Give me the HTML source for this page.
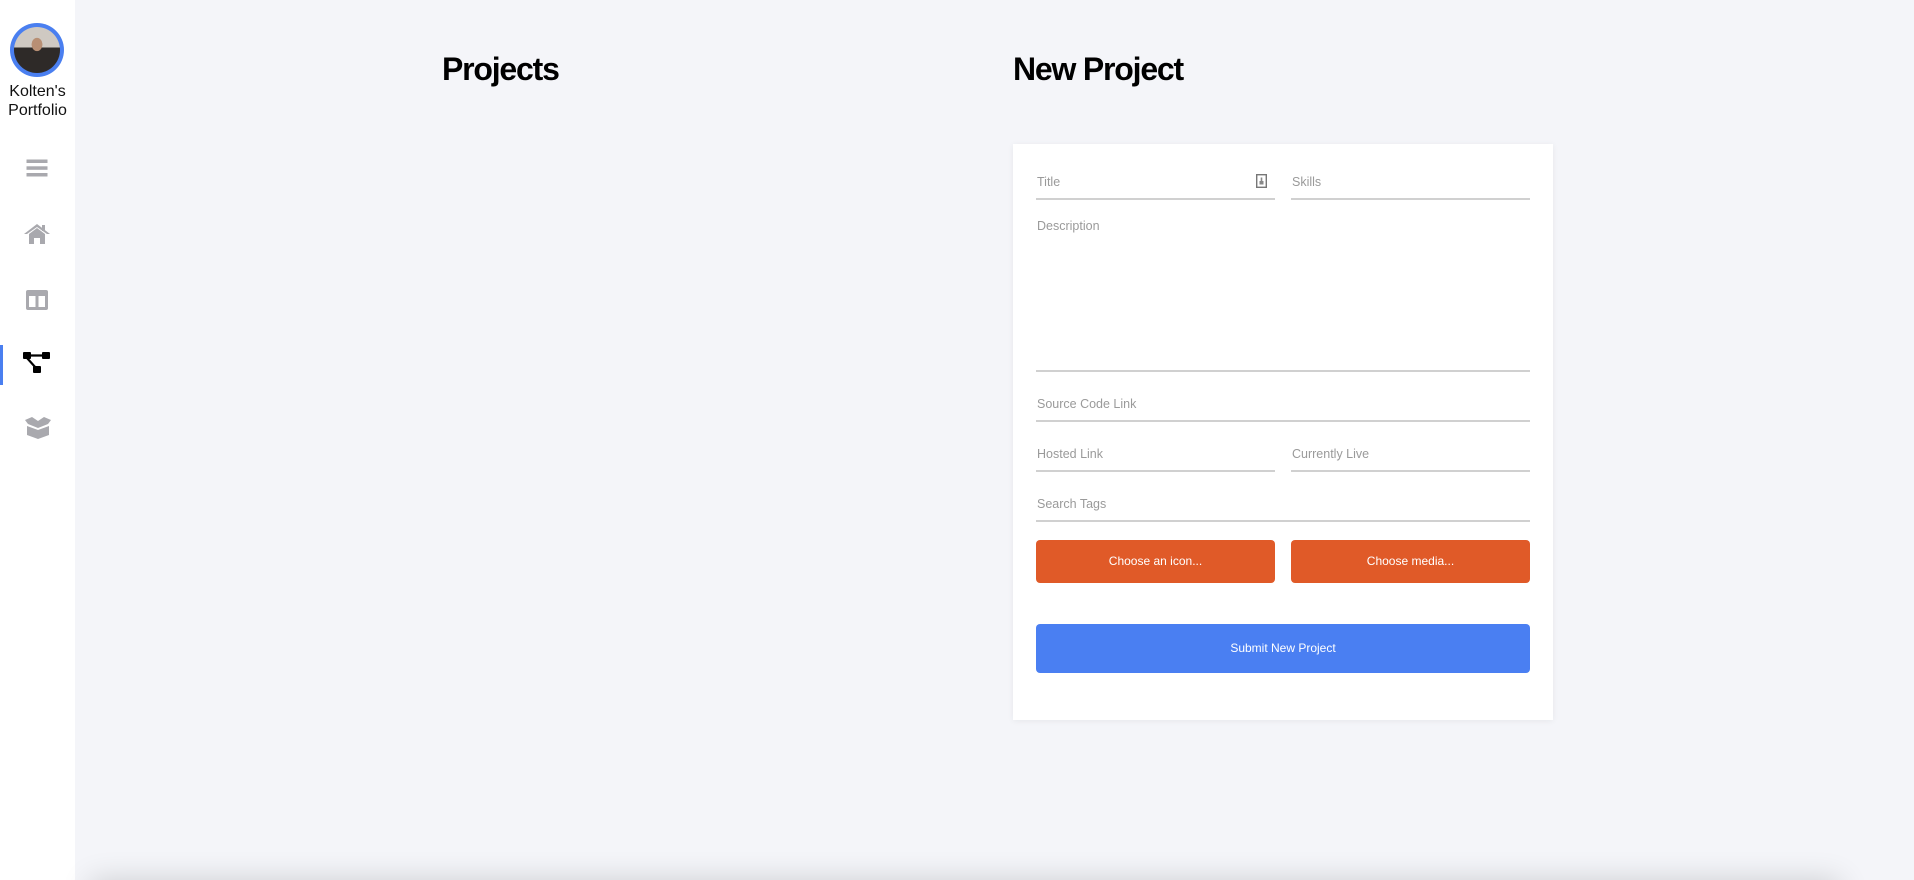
<!DOCTYPE html>
<html style="overflow:hidden;width:1914px;height:880px"><head><meta charset="utf-8"><style>
*{margin:0;padding:0;box-sizing:border-box}
html,body{width:1914px;height:880px;overflow:hidden}
body{background:#f4f5f9;font-family:"Liberation Sans",sans-serif;position:relative}
.side{position:absolute;left:0;top:0;width:75px;height:880px;background:#fff}
.av{position:absolute;left:10px;top:23px;width:54px;height:54px;border-radius:50%;background:#4a7ff0;padding:4px}
.av div{width:100%;height:100%;border-radius:50%;background:radial-gradient(ellipse at 50% 38%,#b88f74 0 16%,transparent 17%),linear-gradient(#cfc9c2 0 45%,#2e2a28 45%);}
.name{position:absolute;left:0;width:75px;top:82px;text-align:center;font-size:16px;line-height:19px;color:#111}
.ic{position:absolute;left:23px}
.bar{position:absolute;left:0;top:345px;width:3px;height:40px;background:#4a7ff0}
h1{position:absolute;top:51px;font-size:32px;font-weight:bold;color:#000;letter-spacing:-1.2px}
.card{position:absolute;left:1013px;top:144px;width:540px;height:576px;background:#fff;box-shadow:0 1px 6px rgba(0,0,0,.06)}
.l{position:absolute;font-size:12.5px;color:#9a9a9a}
.u{position:absolute;height:2px;background:#d0d0d0}
.btn{position:absolute;border-radius:4px;color:#fff;font-size:12px;text-align:center}
.bottom{position:absolute;left:90px;top:880px;width:1750px;height:40px;box-shadow:0 0 30px rgba(0,0,0,.16)}
</style></head><body>
<div class="side">
<div class="av"><div></div></div>
<div class="name">Kolten's<br>Portfolio</div>
<svg class="ic" style="top:158px" width="28" height="20" viewBox="0 0 28 20"><rect x="3.5" y="1.5" width="21" height="3.5" fill="#a9a9ae"/><rect x="3.5" y="8.3" width="21" height="3.5" fill="#a9a9ae"/><rect x="3.5" y="15" width="21" height="3.5" fill="#a9a9ae"/></svg>
<svg class="ic" style="top:222px" width="28" height="24" viewBox="0 0 28 24"><path d="M1 12 L14 2 L27 12 L24 12 L14 5 L4 12Z" fill="#a9a9ae"/><path d="M6 12 L14 6 L22 12 L22 22 L17 22 L17 16 L11 16 L11 22 L6 22Z" fill="#a9a9ae"/><rect x="19" y="3" width="3" height="6" fill="#a9a9ae"/></svg>
<svg class="ic" style="top:289px" width="28" height="22" viewBox="0 0 28 22"><rect x="3" y="1" width="22" height="20" rx="2" fill="#a9a9ae"/><rect x="6" y="7" width="6.5" height="11" fill="#fff"/><rect x="15.5" y="7" width="6.5" height="11" fill="#fff"/></svg>
<div class="bar"></div>
<svg class="ic" style="top:351px" width="30" height="26" viewBox="0 0 30 26"><rect x="0" y="1" width="8" height="7" rx="1" fill="#000"/><rect x="19" y="1" width="8" height="7" rx="1" fill="#000"/><rect x="10" y="15" width="8" height="7" rx="1" fill="#000"/><path d="M7 4.5 H20 M4 7 L13 17" stroke="#000" stroke-width="2.2"/></svg>
<svg class="ic" style="top:416px" width="30" height="24" viewBox="0 0 30 24"><path d="M2 4 L9 1 L15 5 L21 1 L28 4 L25 8 L15 12 L5 8Z" fill="#a9a9ae"/><path d="M4 10 L15 14 L26 10 L26 19 L15 23 L4 19Z" fill="#a9a9ae"/></svg>
</div>
<h1 style="left:442px">Projects</h1>
<h1 style="left:1013px">New Project</h1>
<div class="card"></div>

<div class="l" style="left:1037px;top:175px">Title</div>
<svg style="position:absolute;left:1256px;top:174px" width="11" height="14" viewBox="0 0 11 14"><rect x="0.7" y="0.7" width="9.6" height="12.6" fill="none" stroke="#777" stroke-width="1.4"/><rect x="3.5" y="7" width="4" height="3.5" fill="#888"/><rect x="4.7" y="3.5" width="1.6" height="3.5" fill="#888"/></svg>
<div class="u" style="left:1036px;top:198px;width:239px"></div>
<div class="l" style="left:1292px;top:175px">Skills</div>
<div class="u" style="left:1291px;top:198px;width:239px"></div>
<div class="l" style="left:1037px;top:219px">Description</div>
<div class="u" style="left:1036px;top:370px;width:494px"></div>
<div class="l" style="left:1037px;top:397px">Source Code Link</div>
<div class="u" style="left:1036px;top:420px;width:494px"></div>
<div class="l" style="left:1037px;top:447px">Hosted Link</div>
<div class="u" style="left:1036px;top:470px;width:239px"></div>
<div class="l" style="left:1292px;top:447px">Currently Live</div>
<div class="u" style="left:1291px;top:470px;width:239px"></div>
<div class="l" style="left:1037px;top:497px">Search Tags</div>
<div class="u" style="left:1036px;top:520px;width:494px"></div>

<div class="btn" style="left:1036px;top:540px;width:239px;height:43px;line-height:43px;background:#e05a28">Choose an icon...</div>
<div class="btn" style="left:1291px;top:540px;width:239px;height:43px;line-height:43px;background:#e05a28">Choose media...</div>
<div class="btn" style="left:1036px;top:624px;width:494px;height:49px;line-height:49px;background:#4a7ff2">Submit New Project</div>
<div class="bottom"></div>
</body></html>
